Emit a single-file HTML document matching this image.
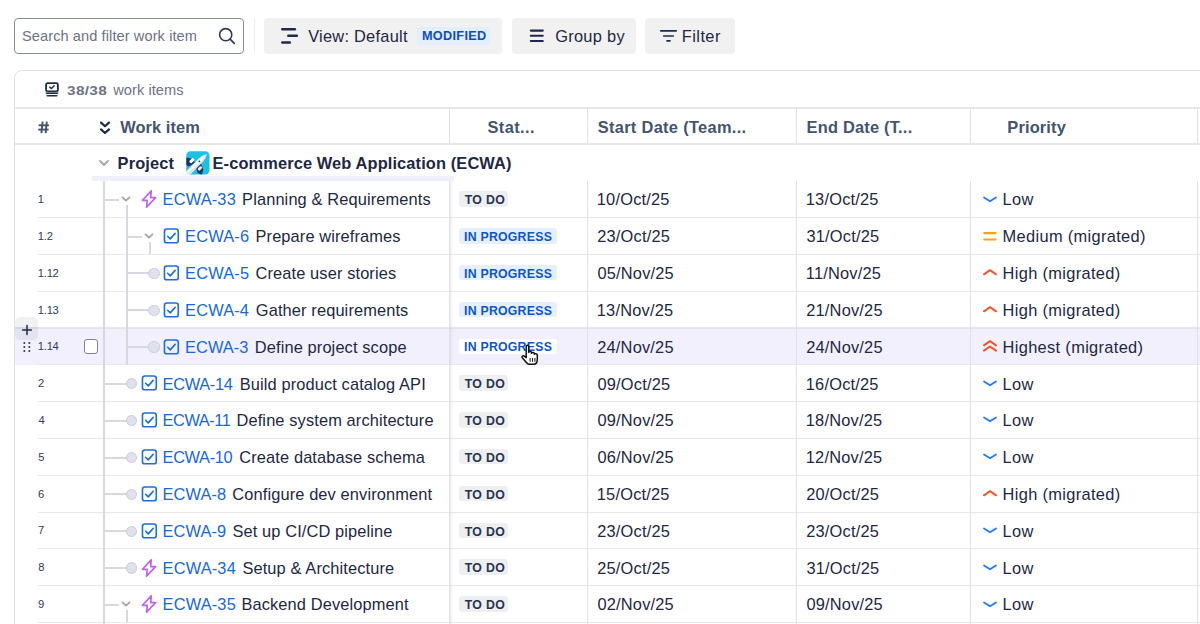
<!DOCTYPE html>
<html><head><meta charset="utf-8"><title>List</title>
<style>
html,body{margin:0;padding:0;background:#fff;}
body{width:1200px;height:624px;overflow:hidden;position:relative;font-family:"Liberation Sans",sans-serif;}
.t{position:absolute;white-space:nowrap;}
.b{position:absolute;display:block;}
</style></head><body>
<div class="b" style="left:14.00px;top:18.00px;width:230.00px;height:36.00px;border:1.2px solid #868c9a;border-radius:4px;box-sizing:border-box;background:#fff"></div>
<div class="t" style="left:21.99px;top:28.48px;font-size:14.6px;line-height:17.52px;color:#6b7385;letter-spacing:0.085px;">Search and filter work item</div>
<svg class="b" style="left:217px;top:26px" width="20" height="20" viewBox="0 0 20 20"><circle cx="8.7" cy="8.7" r="6.1" fill="none" stroke="#2f3a52" stroke-width="1.6"/><line x1="13.1" y1="13.1" x2="17.3" y2="17.3" stroke="#2f3a52" stroke-width="1.7" stroke-linecap="round"/></svg>
<div class="b" style="left:253.50px;top:18.00px;width:1.00px;height:35.00px;background:#eceef0"></div>
<div class="b" style="left:264.00px;top:18.00px;width:238.00px;height:35.50px;background:#f1f1f2;border-radius:4px"></div>
<svg class="b" style="left:279px;top:26px" width="22" height="20" viewBox="0 0 22 20"><g stroke="#1c2b4a" stroke-width="2.5" stroke-linecap="round"><line x1="3.3" y1="3.2" x2="15.8" y2="3.2"/><line x1="9.3" y1="9.7" x2="17.8" y2="9.7"/><line x1="3.3" y1="16.4" x2="10.8" y2="16.4"/></g></svg>
<div class="t" style="left:308.18px;top:26.97px;font-size:16.4px;line-height:19.68px;color:#1d2843;letter-spacing:0.25px;">View: Default</div>
<div class="b" style="left:417.00px;top:27.00px;width:73.00px;height:18.00px;background:#e3eefe;border-radius:3px"></div>
<div class="t" style="left:421.90px;top:28.73px;font-size:12.7px;line-height:15.24px;color:#0b4fba;font-weight:700;letter-spacing:0.33px;">MODIFIED</div>
<div class="b" style="left:511.50px;top:18.00px;width:124.30px;height:35.50px;background:#f1f1f2;border-radius:4px"></div>
<svg class="b" style="left:529px;top:28px" width="16" height="16" viewBox="0 0 16 16"><g stroke="#1c2b4a" stroke-width="2.1" stroke-linecap="round"><line x1="1.8" y1="2.6" x2="13.8" y2="2.6"/><line x1="1.8" y1="7.8" x2="13.8" y2="7.8"/><line x1="1.8" y1="13" x2="13.8" y2="13"/></g></svg>
<div class="t" style="left:555.13px;top:26.97px;font-size:16.4px;line-height:19.68px;color:#1d2843;letter-spacing:0.29px;">Group by</div>
<div class="b" style="left:645.40px;top:18.00px;width:89.40px;height:35.50px;background:#f1f1f2;border-radius:4px"></div>
<svg class="b" style="left:659px;top:27px" width="20" height="18" viewBox="0 0 20 18"><g stroke="#1c2b4a" stroke-width="1.7" stroke-linecap="round"><line x1="1.8" y1="3.8" x2="17.2" y2="3.8"/><line x1="4.8" y1="9.0" x2="14.2" y2="9.0"/><line x1="8" y1="13.8" x2="11" y2="13.8"/></g></svg>
<div class="t" style="left:681.80px;top:26.97px;font-size:16.4px;line-height:19.68px;color:#1d2843;letter-spacing:0.43px;">Filter</div>
<div class="b" style="left:14px;top:70px;width:1250px;height:700px;border:1.3px solid #e0e1e3;border-radius:8px;box-sizing:border-box"></div>
<svg class="b" style="left:44px;top:81px" width="16" height="17" viewBox="0 0 16 17"><rect x="2.1" y="2.2" width="11.8" height="8.2" rx="1.5" fill="none" stroke="#1f2c4a" stroke-width="1.8"/><path d="M5.8 6.1 L7.4 7.5 L10.2 4.8" fill="none" stroke="#1f2c4a" stroke-width="1.4" stroke-linecap="round"/><rect x="1.6" y="11.4" width="12.8" height="1.5" rx=".75" fill="#1f2c4a"/><rect x="2.4" y="13.9" width="11.2" height="1.5" rx=".75" fill="#1f2c4a"/></svg>
<div class="t" style="left:66.74px;top:82.72px;font-size:13.6px;line-height:16.32px;color:#6b7385;font-weight:700;letter-spacing:0.3px;transform:scaleX(1.13);transform-origin:0 0">38/38</div>
<div class="t" style="left:113.27px;top:81.78px;font-size:14.6px;line-height:17.52px;color:#6b7385;letter-spacing:0.05px;">work items</div>
<div class="b" style="left:15.00px;top:107.00px;width:1185.00px;height:2.00px;background:#e6e7ea"></div>
<svg class="b" style="left:37px;top:120px" width="14" height="15" viewBox="0 0 14 15"><g stroke="#44546f" stroke-width="1.9" stroke-linecap="butt"><line x1="5.6" y1="1.6" x2="4.4" y2="13.2"/><line x1="9.8" y1="1.6" x2="8.6" y2="13.2"/><line x1="1.6" y1="5.3" x2="11.9" y2="5.3"/><line x1="1.3" y1="9.6" x2="11.6" y2="9.6"/></g></svg>
<svg class="b" style="left:98px;top:120px" width="14" height="16" viewBox="0 0 14 16"><g fill="none" stroke="#1c2b4a" stroke-width="2.2" stroke-linecap="round" stroke-linejoin="round"><path d="M3 2.6 L7 6.2 L11 2.6"/><path d="M3 9.4 L7 13 L11 9.4"/></g></svg>
<div class="t" style="left:120.13px;top:118.27px;font-size:16.4px;line-height:19.68px;color:#44546f;font-weight:700;letter-spacing:0.1px;">Work item</div>
<div class="t" style="left:487.38px;top:118.27px;font-size:16.4px;line-height:19.68px;color:#44546f;font-weight:700;letter-spacing:0.44px;">Stat...</div>
<div class="t" style="left:597.68px;top:118.27px;font-size:16.4px;line-height:19.68px;color:#44546f;font-weight:700;letter-spacing:0.32px;">Start Date (Team...</div>
<div class="t" style="left:806.55px;top:118.27px;font-size:16.4px;line-height:19.68px;color:#44546f;font-weight:700;letter-spacing:0.21px;">End Date (T...</div>
<div class="t" style="left:1007.30px;top:118.27px;font-size:16.4px;line-height:19.68px;color:#44546f;font-weight:700;letter-spacing:0.16px;">Priority</div>
<div class="b" style="left:448.60px;top:108.50px;width:1.30px;height:35.00px;background:#e0e1e3"></div>
<div class="b" style="left:586.80px;top:108.50px;width:1.30px;height:35.00px;background:#e0e1e3"></div>
<div class="b" style="left:796.00px;top:108.50px;width:1.30px;height:35.00px;background:#e0e1e3"></div>
<div class="b" style="left:969.80px;top:108.50px;width:1.30px;height:35.00px;background:#e0e1e3"></div>
<div class="b" style="left:1197.00px;top:108.50px;width:1.30px;height:35.00px;background:#e0e1e3"></div>
<div class="b" style="left:15.00px;top:143.00px;width:1185.00px;height:2.00px;background:#e6e7ea"></div>
<svg class="b" style="left:97px;top:157px" width="14" height="12" viewBox="0 0 14 12"><path d="M3 4 L7 8 L11 4" fill="none" stroke="#a2a7b1" stroke-width="1.8" stroke-linecap="round" stroke-linejoin="round"/></svg>
<div class="t" style="left:117.55px;top:154.07px;font-size:16.4px;line-height:19.68px;color:#1d2843;font-weight:700;letter-spacing:0.15px;">Project</div>
<svg class="b" style="left:185.5px;top:151.2px" width="24" height="24" viewBox="0 0 24 24"><defs><clipPath id="pc"><rect x="0.3" y="0.2" width="23.2" height="23.4" rx="4.3"/></clipPath></defs><rect x="0.3" y="0.2" width="23.2" height="23.4" rx="4.3" fill="#1cc1e3"/><g clip-path="url(#pc)"><path d="M-1 6.2 L5.5 7.6 L9.2 11.8 L2.8 15.5 L-1 13 Z" fill="#1d3566"/><path d="M9.8 15.2 L14.5 11.5 L17.2 18.5 L16 24 L11.5 22 Z" fill="#1d3566"/><g transform="rotate(-45 5.8 9.8)"><rect x="3.2" y="8.1" width="5.6" height="3.2" rx="1.4" fill="#fff"/></g><g transform="rotate(-45 14 17.5)"><rect x="11.6" y="16" width="4.8" height="2.8" rx="1.2" fill="#e6eaf3"/></g><path d="M-0.8 21.3 L12.2 8.1 Q16.5 3.9 20.6 3.3 Q20.1 7.4 15.9 11.8 L2.9 24.8 Z" fill="#f4f6fb"/><path d="M2.5 23.5 L15.9 11.8 Q20.1 7.4 20.6 3.3 L19.6 3.5 Q18.8 7.2 14.9 11 L1.5 22.6 Z" fill="#d9dfec"/><circle cx="13.3" cy="10.3" r="0.9" fill="#2a4274"/></g></svg>
<div class="t" style="left:212.55px;top:154.07px;font-size:16.4px;line-height:19.68px;color:#1d2843;font-weight:700;letter-spacing:0.12px;">E-commerce Web Application (ECWA)</div>
<div class="b" style="left:92.00px;top:176.30px;width:362.00px;height:4.70px;background:#f0f0f9"></div>
<div class="b" style="left:15.00px;top:327.47px;width:1185.00px;height:37.72px;background:#f2f0fc"></div>
<div class="b" style="left:15.00px;top:326.87px;width:1185.00px;height:2.10px;background:#e3e3e8"></div>
<div class="b" style="left:38px;top:217px;width:1162px;height:1px;background:#e7e8ea"></div>
<div class="t" style="left:37.80px;top:193.10px;font-size:11.2px;line-height:13.44px;color:#2f3b55;letter-spacing:-0.25px;">1</div>
<div class="b" style="left:104.00px;top:199.00px;width:15.10px;height:2.00px;background:#d7d9de"></div>
<svg class="b" style="left:119.60px;top:195.00px" width="12" height="8" viewBox="0 0 12 8"><path d="M2.5 2.4 L6 5.6 L9.5 2.4" fill="none" stroke="#9fa4ad" stroke-width="1.8" stroke-linecap="round" stroke-linejoin="round"/></svg>
<div class="b" style="left:126.00px;top:205.00px;width:2.00px;height:12.00px;background:#d7d9de"></div>
<svg class="b" style="left:140.50px;top:190.40px" width="17" height="18" viewBox="0 0 16.5 18"><path d="M10 0.9 L1.2 10.3 L6 10.3 L5.3 17.1 L14.4 7.6 L9.4 7.6 Z" fill="none" stroke="#c062f0" stroke-width="1.65" stroke-linejoin="round"/></svg>
<div class="t" style="left:162.60px;top:190.47px;font-size:16.4px;line-height:19.68px;color:#1868db;letter-spacing:0.15px;">ECWA-33</div>
<div class="t" style="left:242.10px;top:190.47px;font-size:16.4px;line-height:19.68px;color:#1d2843;letter-spacing:0.12px;">Planning &amp; Requirements</div>
<div class="b" style="left:459.20px;top:191.30px;width:49.10px;height:15.40px;background:#eeeff1;border-radius:3px"></div>
<div class="t" style="left:464.71px;top:193.16px;font-size:12.3px;line-height:14.76px;color:#283350;font-weight:700;letter-spacing:0.36px;">TO DO</div>
<div class="t" style="left:596.80px;top:190.47px;font-size:16.4px;line-height:19.68px;color:#1d2843;letter-spacing:0.2px;">10/Oct/25</div>
<div class="t" style="left:805.80px;top:190.47px;font-size:16.4px;line-height:19.68px;color:#1d2843;letter-spacing:0.2px;">13/Oct/25</div>
<svg class="b" style="left:982.5px;top:195.50px" width="14" height="7" viewBox="0 0 14 7"><path d="M1 1.5 L7 5.3 L13 1.5" fill="none" stroke="#1d7afc" stroke-width="1.7" stroke-linecap="round" stroke-linejoin="round"/></svg>
<div class="t" style="left:1002.60px;top:190.47px;font-size:16.4px;line-height:19.68px;color:#1d2843;letter-spacing:0.33px;">Low</div>
<div class="b" style="left:38px;top:254px;width:1162px;height:1px;background:#e7e8ea"></div>
<div class="t" style="left:37.80px;top:229.91px;font-size:11.2px;line-height:13.44px;color:#2f3b55;letter-spacing:-0.25px;">1.2</div>
<div class="b" style="left:127.00px;top:236.00px;width:15.20px;height:2.00px;background:#d7d9de"></div>
<svg class="b" style="left:142.70px;top:231.82px" width="12" height="8" viewBox="0 0 12 8"><path d="M2.5 2.4 L6 5.6 L9.5 2.4" fill="none" stroke="#9fa4ad" stroke-width="1.8" stroke-linecap="round" stroke-linejoin="round"/></svg>
<div class="b" style="left:149.00px;top:242.00px;width:2.00px;height:12.00px;background:#d7d9de"></div>
<svg class="b" style="left:163.10px;top:227.22px" width="17" height="18" viewBox="0 0 16.5 18"><rect x="1.2" y="2.0" width="13.8" height="13.8" rx="2.4" fill="none" stroke="#1d6ee0" stroke-width="1.6"/><path d="M4.4 9.3 L7 11.9 L11.9 6.4" fill="none" stroke="#1d6ee0" stroke-width="1.6" stroke-linecap="round" stroke-linejoin="round"/></svg>
<div class="t" style="left:185.10px;top:227.29px;font-size:16.4px;line-height:19.68px;color:#1868db;letter-spacing:0.16px;">ECWA-6</div>
<div class="t" style="left:255.50px;top:227.29px;font-size:16.4px;line-height:19.68px;color:#1d2843;letter-spacing:0.12px;">Prepare wireframes</div>
<div class="b" style="left:459.20px;top:228.12px;width:97.50px;height:15.40px;background:#e6effd;border-radius:3px"></div>
<div class="t" style="left:464.03px;top:229.97px;font-size:12.3px;line-height:14.76px;color:#0b56c9;font-weight:700;letter-spacing:0.24px;">IN PROGRESS</div>
<div class="t" style="left:597.23px;top:227.29px;font-size:16.4px;line-height:19.68px;color:#1d2843;letter-spacing:0.2px;">23/Oct/25</div>
<div class="t" style="left:806.43px;top:227.29px;font-size:16.4px;line-height:19.68px;color:#1d2843;letter-spacing:0.2px;">31/Oct/25</div>
<svg class="b" style="left:982.5px;top:230.82px" width="14" height="10" viewBox="0 0 14 10"><g stroke="#f5a40e" stroke-width="2.2" stroke-linecap="round"><line x1="1.3" y1="2.1" x2="12.6" y2="2.1"/><line x1="1.3" y1="8.5" x2="12.6" y2="8.5"/></g></svg>
<div class="t" style="left:1002.60px;top:227.29px;font-size:16.4px;line-height:19.68px;color:#1d2843;letter-spacing:0.33px;">Medium (migrated)</div>
<div class="b" style="left:38px;top:291px;width:1162px;height:1px;background:#e7e8ea"></div>
<div class="t" style="left:37.80px;top:266.73px;font-size:11.2px;line-height:13.44px;color:#2f3b55;letter-spacing:-0.25px;">1.12</div>
<div class="b" style="left:127.00px;top:272.00px;width:23.00px;height:2.00px;background:#d7d9de"></div>
<div class="b" style="left:148.40px;top:267.84px;width:11.2px;height:11.2px;border-radius:50%;background:#dfe2ec;box-sizing:border-box;border:1.1px solid #c9cdd7"></div>
<svg class="b" style="left:163.10px;top:264.04px" width="17" height="18" viewBox="0 0 16.5 18"><rect x="1.2" y="2.0" width="13.8" height="13.8" rx="2.4" fill="none" stroke="#1d6ee0" stroke-width="1.6"/><path d="M4.4 9.3 L7 11.9 L11.9 6.4" fill="none" stroke="#1d6ee0" stroke-width="1.6" stroke-linecap="round" stroke-linejoin="round"/></svg>
<div class="t" style="left:185.10px;top:264.11px;font-size:16.4px;line-height:19.68px;color:#1868db;letter-spacing:0.16px;">ECWA-5</div>
<div class="t" style="left:255.52px;top:264.11px;font-size:16.4px;line-height:19.68px;color:#1d2843;letter-spacing:0.12px;">Create user stories</div>
<div class="b" style="left:459.20px;top:264.94px;width:97.50px;height:15.40px;background:#e6effd;border-radius:3px"></div>
<div class="t" style="left:464.03px;top:266.79px;font-size:12.3px;line-height:14.76px;color:#0b56c9;font-weight:700;letter-spacing:0.24px;">IN PROGRESS</div>
<div class="t" style="left:597.41px;top:264.11px;font-size:16.4px;line-height:19.68px;color:#1d2843;letter-spacing:0.2px;">05/Nov/25</div>
<div class="t" style="left:805.80px;top:264.11px;font-size:16.4px;line-height:19.68px;color:#1d2843;letter-spacing:0.2px;">11/Nov/25</div>
<svg class="b" style="left:982.5px;top:269.14px" width="14" height="7" viewBox="0 0 14 7"><path d="M1 5.3 L7 1.2 L13 5.3" fill="none" stroke="#f0552e" stroke-width="2" stroke-linecap="round" stroke-linejoin="round"/></svg>
<div class="t" style="left:1002.60px;top:264.11px;font-size:16.4px;line-height:19.68px;color:#1d2843;letter-spacing:0.33px;">High (migrated)</div>
<div class="b" style="left:38px;top:327px;width:1162px;height:1px;background:#e7e8ea"></div>
<div class="t" style="left:37.80px;top:303.55px;font-size:11.2px;line-height:13.44px;color:#2f3b55;letter-spacing:-0.25px;">1.13</div>
<div class="b" style="left:127.00px;top:309.00px;width:23.00px;height:2.00px;background:#d7d9de"></div>
<div class="b" style="left:148.40px;top:304.65px;width:11.2px;height:11.2px;border-radius:50%;background:#dfe2ec;box-sizing:border-box;border:1.1px solid #c9cdd7"></div>
<svg class="b" style="left:163.10px;top:300.85px" width="17" height="18" viewBox="0 0 16.5 18"><rect x="1.2" y="2.0" width="13.8" height="13.8" rx="2.4" fill="none" stroke="#1d6ee0" stroke-width="1.6"/><path d="M4.4 9.3 L7 11.9 L11.9 6.4" fill="none" stroke="#1d6ee0" stroke-width="1.6" stroke-linecap="round" stroke-linejoin="round"/></svg>
<div class="t" style="left:185.10px;top:300.93px;font-size:16.4px;line-height:19.68px;color:#1868db;letter-spacing:0.14px;">ECWA-4</div>
<div class="t" style="left:255.83px;top:300.93px;font-size:16.4px;line-height:19.68px;color:#1d2843;letter-spacing:0.12px;">Gather requirements</div>
<div class="b" style="left:459.20px;top:301.75px;width:97.50px;height:15.40px;background:#e6effd;border-radius:3px"></div>
<div class="t" style="left:464.03px;top:303.61px;font-size:12.3px;line-height:14.76px;color:#0b56c9;font-weight:700;letter-spacing:0.24px;">IN PROGRESS</div>
<div class="t" style="left:596.80px;top:300.93px;font-size:16.4px;line-height:19.68px;color:#1d2843;letter-spacing:0.2px;">13/Nov/25</div>
<div class="t" style="left:806.23px;top:300.93px;font-size:16.4px;line-height:19.68px;color:#1d2843;letter-spacing:0.2px;">21/Nov/25</div>
<svg class="b" style="left:982.5px;top:305.95px" width="14" height="7" viewBox="0 0 14 7"><path d="M1 5.3 L7 1.2 L13 5.3" fill="none" stroke="#f0552e" stroke-width="2" stroke-linecap="round" stroke-linejoin="round"/></svg>
<div class="t" style="left:1002.60px;top:300.93px;font-size:16.4px;line-height:19.68px;color:#1d2843;letter-spacing:0.33px;">High (migrated)</div>
<div class="b" style="left:38px;top:364px;width:1162px;height:1px;background:#e7e8ea"></div>
<div class="t" style="left:37.80px;top:340.37px;font-size:11.2px;line-height:13.44px;color:#2f3b55;letter-spacing:-0.25px;">1.14</div>
<div class="b" style="left:127.00px;top:346.00px;width:23.00px;height:2.00px;background:#d7d9de"></div>
<div class="b" style="left:148.40px;top:341.47px;width:11.2px;height:11.2px;border-radius:50%;background:#dfe2ec;box-sizing:border-box;border:1.1px solid #c9cdd7"></div>
<svg class="b" style="left:163.10px;top:337.67px" width="17" height="18" viewBox="0 0 16.5 18"><rect x="1.2" y="2.0" width="13.8" height="13.8" rx="2.4" fill="none" stroke="#1d6ee0" stroke-width="1.6"/><path d="M4.4 9.3 L7 11.9 L11.9 6.4" fill="none" stroke="#1d6ee0" stroke-width="1.6" stroke-linecap="round" stroke-linejoin="round"/></svg>
<div class="t" style="left:185.10px;top:337.75px;font-size:16.4px;line-height:19.68px;color:#1868db;letter-spacing:0.04px;">ECWA-3</div>
<div class="t" style="left:254.80px;top:337.75px;font-size:16.4px;line-height:19.68px;color:#1d2843;letter-spacing:0.12px;">Define project scope</div>
<div class="b" style="left:459.20px;top:338.57px;width:97.50px;height:15.40px;background:#ffffff;border-radius:3px"></div>
<div class="t" style="left:464.03px;top:340.43px;font-size:12.3px;line-height:14.76px;color:#0b56c9;font-weight:700;letter-spacing:0.24px;">IN PROGRESS</div>
<div class="t" style="left:597.23px;top:337.75px;font-size:16.4px;line-height:19.68px;color:#1d2843;letter-spacing:0.2px;">24/Nov/25</div>
<div class="t" style="left:806.23px;top:337.75px;font-size:16.4px;line-height:19.68px;color:#1d2843;letter-spacing:0.2px;">24/Nov/25</div>
<svg class="b" style="left:982.5px;top:340.27px" width="14" height="12" viewBox="0 0 14 12"><g fill="none" stroke="#f0552e" stroke-width="2" stroke-linecap="round" stroke-linejoin="round"><path d="M1 5.3 L7 1.2 L13 5.3"/><path d="M1 10.6 L7 6.5 L13 10.6"/></g></svg>
<div class="t" style="left:1002.60px;top:337.75px;font-size:16.4px;line-height:19.68px;color:#1d2843;letter-spacing:0.33px;">Highest (migrated)</div>
<div class="b" style="left:38px;top:401px;width:1162px;height:1px;background:#e7e8ea"></div>
<div class="t" style="left:38.09px;top:377.19px;font-size:11.2px;line-height:13.44px;color:#2f3b55;letter-spacing:-0.25px;">2</div>
<div class="b" style="left:104.00px;top:383.00px;width:23.40px;height:2.00px;background:#d7d9de"></div>
<div class="b" style="left:125.80px;top:378.29px;width:11.2px;height:11.2px;border-radius:50%;background:#dfe2ec;box-sizing:border-box;border:1.1px solid #c9cdd7"></div>
<svg class="b" style="left:140.50px;top:374.49px" width="17" height="18" viewBox="0 0 16.5 18"><rect x="1.2" y="2.0" width="13.8" height="13.8" rx="2.4" fill="none" stroke="#1d6ee0" stroke-width="1.6"/><path d="M4.4 9.3 L7 11.9 L11.9 6.4" fill="none" stroke="#1d6ee0" stroke-width="1.6" stroke-linecap="round" stroke-linejoin="round"/></svg>
<div class="t" style="left:162.60px;top:374.56px;font-size:16.4px;line-height:19.68px;color:#1868db;letter-spacing:-0.33px;">ECWA-14</div>
<div class="t" style="left:239.70px;top:374.56px;font-size:16.4px;line-height:19.68px;color:#1d2843;letter-spacing:0.12px;">Build product catalog API</div>
<div class="b" style="left:459.20px;top:375.39px;width:49.10px;height:15.40px;background:#eeeff1;border-radius:3px"></div>
<div class="t" style="left:464.71px;top:377.25px;font-size:12.3px;line-height:14.76px;color:#283350;font-weight:700;letter-spacing:0.36px;">TO DO</div>
<div class="t" style="left:597.41px;top:374.56px;font-size:16.4px;line-height:19.68px;color:#1d2843;letter-spacing:0.2px;">09/Oct/25</div>
<div class="t" style="left:805.80px;top:374.56px;font-size:16.4px;line-height:19.68px;color:#1d2843;letter-spacing:0.2px;">16/Oct/25</div>
<svg class="b" style="left:982.5px;top:379.59px" width="14" height="7" viewBox="0 0 14 7"><path d="M1 1.5 L7 5.3 L13 1.5" fill="none" stroke="#1d7afc" stroke-width="1.7" stroke-linecap="round" stroke-linejoin="round"/></svg>
<div class="t" style="left:1002.60px;top:374.56px;font-size:16.4px;line-height:19.68px;color:#1d2843;letter-spacing:0.33px;">Low</div>
<div class="b" style="left:38px;top:438px;width:1162px;height:1px;background:#e7e8ea"></div>
<div class="t" style="left:38.39px;top:414.00px;font-size:11.2px;line-height:13.44px;color:#2f3b55;letter-spacing:-0.25px;">4</div>
<div class="b" style="left:104.00px;top:420.00px;width:23.40px;height:2.00px;background:#d7d9de"></div>
<div class="b" style="left:125.80px;top:415.11px;width:11.2px;height:11.2px;border-radius:50%;background:#dfe2ec;box-sizing:border-box;border:1.1px solid #c9cdd7"></div>
<svg class="b" style="left:140.50px;top:411.31px" width="17" height="18" viewBox="0 0 16.5 18"><rect x="1.2" y="2.0" width="13.8" height="13.8" rx="2.4" fill="none" stroke="#1d6ee0" stroke-width="1.6"/><path d="M4.4 9.3 L7 11.9 L11.9 6.4" fill="none" stroke="#1d6ee0" stroke-width="1.6" stroke-linecap="round" stroke-linejoin="round"/></svg>
<div class="t" style="left:162.60px;top:411.38px;font-size:16.4px;line-height:19.68px;color:#1868db;letter-spacing:-0.48px;">ECWA-11</div>
<div class="t" style="left:236.50px;top:411.38px;font-size:16.4px;line-height:19.68px;color:#1d2843;letter-spacing:0.12px;">Define system architecture</div>
<div class="b" style="left:459.20px;top:412.21px;width:49.10px;height:15.40px;background:#eeeff1;border-radius:3px"></div>
<div class="t" style="left:464.71px;top:414.06px;font-size:12.3px;line-height:14.76px;color:#283350;font-weight:700;letter-spacing:0.36px;">TO DO</div>
<div class="t" style="left:597.41px;top:411.38px;font-size:16.4px;line-height:19.68px;color:#1d2843;letter-spacing:0.2px;">09/Nov/25</div>
<div class="t" style="left:805.80px;top:411.38px;font-size:16.4px;line-height:19.68px;color:#1d2843;letter-spacing:0.2px;">18/Nov/25</div>
<svg class="b" style="left:982.5px;top:416.41px" width="14" height="7" viewBox="0 0 14 7"><path d="M1 1.5 L7 5.3 L13 1.5" fill="none" stroke="#1d7afc" stroke-width="1.7" stroke-linecap="round" stroke-linejoin="round"/></svg>
<div class="t" style="left:1002.60px;top:411.38px;font-size:16.4px;line-height:19.68px;color:#1d2843;letter-spacing:0.33px;">Low</div>
<div class="b" style="left:38px;top:475px;width:1162px;height:1px;background:#e7e8ea"></div>
<div class="t" style="left:38.20px;top:450.82px;font-size:11.2px;line-height:13.44px;color:#2f3b55;letter-spacing:-0.25px;">5</div>
<div class="b" style="left:104.00px;top:457.00px;width:23.40px;height:2.00px;background:#d7d9de"></div>
<div class="b" style="left:125.80px;top:451.93px;width:11.2px;height:11.2px;border-radius:50%;background:#dfe2ec;box-sizing:border-box;border:1.1px solid #c9cdd7"></div>
<svg class="b" style="left:140.50px;top:448.13px" width="17" height="18" viewBox="0 0 16.5 18"><rect x="1.2" y="2.0" width="13.8" height="13.8" rx="2.4" fill="none" stroke="#1d6ee0" stroke-width="1.6"/><path d="M4.4 9.3 L7 11.9 L11.9 6.4" fill="none" stroke="#1d6ee0" stroke-width="1.6" stroke-linecap="round" stroke-linejoin="round"/></svg>
<div class="t" style="left:162.60px;top:448.20px;font-size:16.4px;line-height:19.68px;color:#1868db;letter-spacing:-0.38px;">ECWA-10</div>
<div class="t" style="left:239.32px;top:448.20px;font-size:16.4px;line-height:19.68px;color:#1d2843;letter-spacing:0.12px;">Create database schema</div>
<div class="b" style="left:459.20px;top:449.03px;width:49.10px;height:15.40px;background:#eeeff1;border-radius:3px"></div>
<div class="t" style="left:464.71px;top:450.88px;font-size:12.3px;line-height:14.76px;color:#283350;font-weight:700;letter-spacing:0.36px;">TO DO</div>
<div class="t" style="left:597.41px;top:448.20px;font-size:16.4px;line-height:19.68px;color:#1d2843;letter-spacing:0.2px;">06/Nov/25</div>
<div class="t" style="left:805.80px;top:448.20px;font-size:16.4px;line-height:19.68px;color:#1d2843;letter-spacing:0.2px;">12/Nov/25</div>
<svg class="b" style="left:982.5px;top:453.23px" width="14" height="7" viewBox="0 0 14 7"><path d="M1 1.5 L7 5.3 L13 1.5" fill="none" stroke="#1d7afc" stroke-width="1.7" stroke-linecap="round" stroke-linejoin="round"/></svg>
<div class="t" style="left:1002.60px;top:448.20px;font-size:16.4px;line-height:19.68px;color:#1d2843;letter-spacing:0.33px;">Low</div>
<div class="b" style="left:38px;top:512px;width:1162px;height:1px;background:#e7e8ea"></div>
<div class="t" style="left:38.08px;top:487.64px;font-size:11.2px;line-height:13.44px;color:#2f3b55;letter-spacing:-0.25px;">6</div>
<div class="b" style="left:104.00px;top:493.00px;width:23.40px;height:2.00px;background:#d7d9de"></div>
<div class="b" style="left:125.80px;top:488.74px;width:11.2px;height:11.2px;border-radius:50%;background:#dfe2ec;box-sizing:border-box;border:1.1px solid #c9cdd7"></div>
<svg class="b" style="left:140.50px;top:484.94px" width="17" height="18" viewBox="0 0 16.5 18"><rect x="1.2" y="2.0" width="13.8" height="13.8" rx="2.4" fill="none" stroke="#1d6ee0" stroke-width="1.6"/><path d="M4.4 9.3 L7 11.9 L11.9 6.4" fill="none" stroke="#1d6ee0" stroke-width="1.6" stroke-linecap="round" stroke-linejoin="round"/></svg>
<div class="t" style="left:162.60px;top:485.02px;font-size:16.4px;line-height:19.68px;color:#1868db;letter-spacing:0.06px;">ECWA-8</div>
<div class="t" style="left:232.32px;top:485.02px;font-size:16.4px;line-height:19.68px;color:#1d2843;letter-spacing:0.12px;">Configure dev environment</div>
<div class="b" style="left:459.20px;top:485.84px;width:49.10px;height:15.40px;background:#eeeff1;border-radius:3px"></div>
<div class="t" style="left:464.71px;top:487.70px;font-size:12.3px;line-height:14.76px;color:#283350;font-weight:700;letter-spacing:0.36px;">TO DO</div>
<div class="t" style="left:596.80px;top:485.02px;font-size:16.4px;line-height:19.68px;color:#1d2843;letter-spacing:0.2px;">15/Oct/25</div>
<div class="t" style="left:806.23px;top:485.02px;font-size:16.4px;line-height:19.68px;color:#1d2843;letter-spacing:0.2px;">20/Oct/25</div>
<svg class="b" style="left:982.5px;top:490.04px" width="14" height="7" viewBox="0 0 14 7"><path d="M1 5.3 L7 1.2 L13 5.3" fill="none" stroke="#f0552e" stroke-width="2" stroke-linecap="round" stroke-linejoin="round"/></svg>
<div class="t" style="left:1002.60px;top:485.02px;font-size:16.4px;line-height:19.68px;color:#1d2843;letter-spacing:0.33px;">High (migrated)</div>
<div class="b" style="left:38px;top:548px;width:1162px;height:1px;background:#e7e8ea"></div>
<div class="t" style="left:38.08px;top:524.46px;font-size:11.2px;line-height:13.44px;color:#2f3b55;letter-spacing:-0.25px;">7</div>
<div class="b" style="left:104.00px;top:530.00px;width:23.40px;height:2.00px;background:#d7d9de"></div>
<div class="b" style="left:125.80px;top:525.56px;width:11.2px;height:11.2px;border-radius:50%;background:#dfe2ec;box-sizing:border-box;border:1.1px solid #c9cdd7"></div>
<svg class="b" style="left:140.50px;top:521.76px" width="17" height="18" viewBox="0 0 16.5 18"><rect x="1.2" y="2.0" width="13.8" height="13.8" rx="2.4" fill="none" stroke="#1d6ee0" stroke-width="1.6"/><path d="M4.4 9.3 L7 11.9 L11.9 6.4" fill="none" stroke="#1d6ee0" stroke-width="1.6" stroke-linecap="round" stroke-linejoin="round"/></svg>
<div class="t" style="left:162.60px;top:521.84px;font-size:16.4px;line-height:19.68px;color:#1868db;letter-spacing:0.06px;">ECWA-9</div>
<div class="t" style="left:232.41px;top:521.84px;font-size:16.4px;line-height:19.68px;color:#1d2843;letter-spacing:0.12px;">Set up CI/CD pipeline</div>
<div class="b" style="left:459.20px;top:522.66px;width:49.10px;height:15.40px;background:#eeeff1;border-radius:3px"></div>
<div class="t" style="left:464.71px;top:524.52px;font-size:12.3px;line-height:14.76px;color:#283350;font-weight:700;letter-spacing:0.36px;">TO DO</div>
<div class="t" style="left:597.23px;top:521.84px;font-size:16.4px;line-height:19.68px;color:#1d2843;letter-spacing:0.2px;">23/Oct/25</div>
<div class="t" style="left:806.23px;top:521.84px;font-size:16.4px;line-height:19.68px;color:#1d2843;letter-spacing:0.2px;">23/Oct/25</div>
<svg class="b" style="left:982.5px;top:526.86px" width="14" height="7" viewBox="0 0 14 7"><path d="M1 1.5 L7 5.3 L13 1.5" fill="none" stroke="#1d7afc" stroke-width="1.7" stroke-linecap="round" stroke-linejoin="round"/></svg>
<div class="t" style="left:1002.60px;top:521.84px;font-size:16.4px;line-height:19.68px;color:#1d2843;letter-spacing:0.33px;">Low</div>
<div class="b" style="left:38px;top:585px;width:1162px;height:1px;background:#e7e8ea"></div>
<div class="t" style="left:38.16px;top:561.28px;font-size:11.2px;line-height:13.44px;color:#2f3b55;letter-spacing:-0.25px;">8</div>
<div class="b" style="left:104.00px;top:567.00px;width:23.40px;height:2.00px;background:#d7d9de"></div>
<div class="b" style="left:125.80px;top:562.38px;width:11.2px;height:11.2px;border-radius:50%;background:#dfe2ec;box-sizing:border-box;border:1.1px solid #c9cdd7"></div>
<svg class="b" style="left:140.50px;top:558.58px" width="17" height="18" viewBox="0 0 16.5 18"><path d="M10 0.9 L1.2 10.3 L6 10.3 L5.3 17.1 L14.4 7.6 L9.4 7.6 Z" fill="none" stroke="#c062f0" stroke-width="1.65" stroke-linejoin="round"/></svg>
<div class="t" style="left:162.60px;top:558.65px;font-size:16.4px;line-height:19.68px;color:#1868db;letter-spacing:0.15px;">ECWA-34</div>
<div class="t" style="left:242.41px;top:558.65px;font-size:16.4px;line-height:19.68px;color:#1d2843;letter-spacing:0.12px;">Setup &amp; Architecture</div>
<div class="b" style="left:459.20px;top:559.48px;width:49.10px;height:15.40px;background:#eeeff1;border-radius:3px"></div>
<div class="t" style="left:464.71px;top:561.34px;font-size:12.3px;line-height:14.76px;color:#283350;font-weight:700;letter-spacing:0.36px;">TO DO</div>
<div class="t" style="left:597.23px;top:558.65px;font-size:16.4px;line-height:19.68px;color:#1d2843;letter-spacing:0.2px;">25/Oct/25</div>
<div class="t" style="left:806.43px;top:558.65px;font-size:16.4px;line-height:19.68px;color:#1d2843;letter-spacing:0.2px;">31/Oct/25</div>
<svg class="b" style="left:982.5px;top:563.68px" width="14" height="7" viewBox="0 0 14 7"><path d="M1 1.5 L7 5.3 L13 1.5" fill="none" stroke="#1d7afc" stroke-width="1.7" stroke-linecap="round" stroke-linejoin="round"/></svg>
<div class="t" style="left:1002.60px;top:558.65px;font-size:16.4px;line-height:19.68px;color:#1d2843;letter-spacing:0.33px;">Low</div>
<div class="b" style="left:38px;top:622px;width:1162px;height:1px;background:#e7e8ea"></div>
<div class="t" style="left:38.12px;top:598.09px;font-size:11.2px;line-height:13.44px;color:#2f3b55;letter-spacing:-0.25px;">9</div>
<div class="b" style="left:104.00px;top:604.00px;width:15.10px;height:2.00px;background:#d7d9de"></div>
<svg class="b" style="left:119.60px;top:600.00px" width="12" height="8" viewBox="0 0 12 8"><path d="M2.5 2.4 L6 5.6 L9.5 2.4" fill="none" stroke="#9fa4ad" stroke-width="1.8" stroke-linecap="round" stroke-linejoin="round"/></svg>
<div class="b" style="left:126.00px;top:610.00px;width:2.00px;height:12.00px;background:#d7d9de"></div>
<svg class="b" style="left:140.50px;top:595.40px" width="17" height="18" viewBox="0 0 16.5 18"><path d="M10 0.9 L1.2 10.3 L6 10.3 L5.3 17.1 L14.4 7.6 L9.4 7.6 Z" fill="none" stroke="#c062f0" stroke-width="1.65" stroke-linejoin="round"/></svg>
<div class="t" style="left:162.60px;top:595.47px;font-size:16.4px;line-height:19.68px;color:#1868db;letter-spacing:0.15px;">ECWA-35</div>
<div class="t" style="left:241.40px;top:595.47px;font-size:16.4px;line-height:19.68px;color:#1d2843;letter-spacing:0.12px;">Backend Development</div>
<div class="b" style="left:459.20px;top:596.30px;width:49.10px;height:15.40px;background:#eeeff1;border-radius:3px"></div>
<div class="t" style="left:464.71px;top:598.15px;font-size:12.3px;line-height:14.76px;color:#283350;font-weight:700;letter-spacing:0.36px;">TO DO</div>
<div class="t" style="left:597.41px;top:595.47px;font-size:16.4px;line-height:19.68px;color:#1d2843;letter-spacing:0.2px;">02/Nov/25</div>
<div class="t" style="left:806.41px;top:595.47px;font-size:16.4px;line-height:19.68px;color:#1d2843;letter-spacing:0.2px;">09/Nov/25</div>
<svg class="b" style="left:982.5px;top:600.50px" width="14" height="7" viewBox="0 0 14 7"><path d="M1 1.5 L7 5.3 L13 1.5" fill="none" stroke="#1d7afc" stroke-width="1.7" stroke-linecap="round" stroke-linejoin="round"/></svg>
<div class="t" style="left:1002.60px;top:595.47px;font-size:16.4px;line-height:19.68px;color:#1d2843;letter-spacing:0.33px;">Low</div>
<div class="b" style="left:587px;top:181px;width:1px;height:443px;background:#e0e1e3"></div>
<div class="b" style="left:796px;top:181px;width:1px;height:443px;background:#e0e1e3"></div>
<div class="b" style="left:970px;top:181px;width:1px;height:443px;background:#e0e1e3"></div>
<div class="b" style="left:1197px;top:181px;width:1px;height:443px;background:#e0e1e3"></div>
<div class="b" style="left:448.90px;top:180.50px;width:1.30px;height:443.50px;background:#e0e1e3"></div>
<div class="b" style="left:450.20px;top:180.50px;width:3.30px;height:443.50px;background:linear-gradient(90deg,rgba(9,30,66,.08),rgba(9,30,66,0))"></div>
<div class="b" style="left:103.00px;top:181.00px;width:2.00px;height:443.00px;background:#d7d9de"></div>
<div class="b" style="left:126.00px;top:217.00px;width:2.00px;height:148.00px;background:#d7d9de"></div>
<div class="b" style="left:15.30px;top:317.00px;width:22.60px;height:22.50px;background:rgba(9,30,66,.06);border-radius:5px"></div>
<svg class="b" style="left:21px;top:324px" width="12" height="12" viewBox="0 0 12 12"><g stroke="#1c2b4a" stroke-width="1.5" stroke-linecap="round"><line x1="6" y1="1.6" x2="6" y2="10.4"/><line x1="1.6" y1="6" x2="10.4" y2="6"/></g></svg>
<svg class="b" style="left:22px;top:341px" width="10" height="12" viewBox="0 0 10 12"><g fill="#2a3550"><circle cx="2.3" cy="2" r="1.0"/><circle cx="7.3" cy="2" r="1.0"/><circle cx="2.3" cy="6" r="1.0"/><circle cx="7.3" cy="6" r="1.0"/><circle cx="2.3" cy="10" r="1.0"/><circle cx="7.3" cy="10" r="1.0"/></g></svg>
<div class="b" style="left:83.80px;top:339.20px;width:14.50px;height:14.50px;border:1.5px solid #7b8293;border-radius:3px;box-sizing:border-box;background:#fff"></div>
<svg class="b" style="left:519px;top:343px" width="24" height="23" viewBox="0 0 24 23"><path d="M7.2 3.4 C7.2 1.7 9.7 1.7 9.7 3.4 L9.7 9.2 C10 8.2 12.5 8.2 12.5 9.5 L12.5 10.2 C12.9 9.2 15.3 9.3 15.3 10.6 L15.3 11.2 C15.8 10.3 18.3 10.5 18.3 11.9 L18.3 16.2 C18.3 19.2 16.6 21.3 14.3 21.3 L11 21.3 C9.4 21.3 8.4 20.6 7.4 19.4 L3.3 14.8 C2.3 13.5 4.1 12 5.4 13.1 L7.2 14.6 Z" fill="#fff" stroke="#111" stroke-width="1.5" stroke-linejoin="round"/><g stroke="#222" stroke-width="1.1"><line x1="11.1" y1="15" x2="11.1" y2="18.8"/><line x1="13.5" y1="15" x2="13.5" y2="18.8"/><line x1="15.9" y1="15" x2="15.9" y2="18.8"/></g></svg>
</body></html>
